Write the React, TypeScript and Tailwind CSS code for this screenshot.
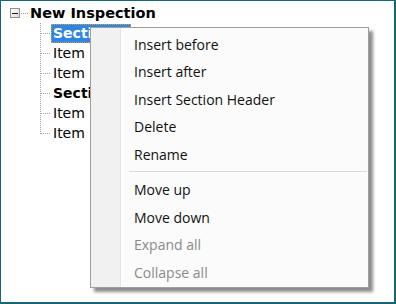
import React from "react";

const treeFont = { fontFamily: '"DejaVu Sans", Verdana, sans-serif' };
const menuFont = { fontFamily: '"Open Sans", "Noto Sans", sans-serif' };

function Connector({ last }: { last?: boolean }) {
  return (
    <svg width="11" height="20" className="shrink-0 block">
      <line x1="0.5" y1="0" x2="0.5" y2={last ? 11 : 20} stroke="#a0a0a0" strokeDasharray="1 1" />
      <line x1="1" y1="10.5" x2="11" y2="10.5" stroke="#a0a0a0" strokeDasharray="1 1" />
    </svg>
  );
}

function Row({ text, bold, selected, last }: { text: string; bold?: boolean; selected?: boolean; last?: boolean }) {
  return (
    <div className="flex items-center h-[20px]">
      <Connector last={last} />
      {selected ? (
        <span className="h-[19px] w-[80px] flex items-center px-[1px] bg-[#2f86e0] text-white font-bold outline-1 outline-dotted outline-[#e59a3c] -outline-offset-1 leading-none">
          <span className="ml-[1px]">{text}</span>
        </span>
      ) : (
        <span className={`px-[2px] leading-none text-black ${bold ? "font-bold" : ""}`}>{text}</span>
      )}
    </div>
  );
}

function MenuItem({ text, disabled }: { text: string; disabled?: boolean }) {
  return (
    <div className={`h-[27.5px] flex items-center pl-[43px] text-[14px] leading-none ${disabled ? "text-[#8a8a8a]" : "text-[#111]"}`}>
      {text}
    </div>
  );
}

export default function App() {
  return (
    <div className="relative w-[396px] h-[304px] bg-white border-l border-t border-r-2 border-b-2 border-[#17657a] overflow-hidden">
      <div className="pt-[2px] text-[14px]" style={treeFont}>
        <div className="flex items-center h-[20px] pl-[9px]">
          <div className="w-[10px] h-[10px] border border-[#919191] bg-gradient-to-br from-white to-[#dcdcdc] flex items-center justify-center shrink-0">
            <div className="w-[6px] h-[1px] bg-[#1a1a1a]" />
          </div>
          <svg width="10" height="20" className="shrink-0 block">
            <line x1="1" y1="10.5" x2="9" y2="10.5" stroke="#a0a0a0" strokeDasharray="1 1" />
          </svg>
          <span className="font-bold text-black leading-none text-[14.5px]">New Inspection</span>
        </div>
        <div className="pl-[39px] flex flex-col">
          <Row text="Section" selected />
          <Row text="Item" />
          <Row text="Item" />
          <Row text="Section" bold />
          <Row text="Item" />
          <Row text="Item" last />
        </div>
      </div>

      <div
        className="absolute left-[89px] top-[26px] w-[279px] border border-[#a0a0a0] pt-[3px] pb-[1px] shadow-[4px_4px_3px_rgba(0,0,0,0.45)] bg-[linear-gradient(to_right,#f1f1f1_29px,#e3e3e3_29px,#e3e3e3_30px,#ffffff_30px,#ffffff_31px,#fbfbfb_31px)]"
        style={menuFont}
      >
        <MenuItem text="Insert before" />
        <MenuItem text="Insert after" />
        <MenuItem text="Insert Section Header" />
        <MenuItem text="Delete" />
        <MenuItem text="Rename" />
        <div className="h-[7.75px] flex flex-col justify-center">
          <div className="ml-[38px] mr-[1px] h-[1px] bg-[#d7d7d7]" />
          <div className="ml-[38px] mr-[1px] h-[1px] bg-white" />
        </div>
        <MenuItem text="Move up" />
        <MenuItem text="Move down" />
        <MenuItem text="Expand all" disabled />
        <MenuItem text="Collapse all" disabled />
      </div>
    </div>
  );
}
